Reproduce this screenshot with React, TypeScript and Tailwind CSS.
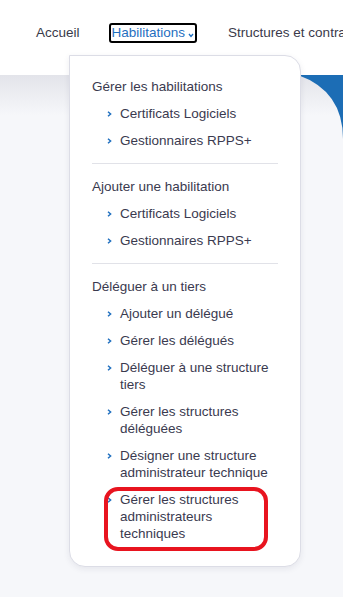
import { Fragment } from "react"

type Item = string[]

const sections: { title: string; items: Item[] }[] = [
  {
    title: "Gérer les habilitations",
    items: [["Certificats Logiciels"], ["Gestionnaires RPPS+"]],
  },
  {
    title: "Ajouter une habilitation",
    items: [["Certificats Logiciels"], ["Gestionnaires RPPS+"]],
  },
  {
    title: "Déléguer à un tiers",
    items: [
      ["Ajouter un délégué"],
      ["Gérer les délégués"],
      ["Déléguer à une structure tiers"],
      ["Gérer les structures déléguées"],
      ["Désigner une structure administrateur technique"],
      ["Gérer les structures administrateurs techniques"],
    ],
  },
]

function Chevron() {
  return (
    <svg width="5" height="6" viewBox="0 0 5 6" className="mt-[6px] shrink-0">
      <path d="M1 0.8 L3.6 3 L1 5.2" fill="none" stroke="#1f6fbf" strokeWidth="1.5" />
    </svg>
  )
}

export default function App() {
  return (
    <div className="relative h-[597px] w-[343px] overflow-hidden bg-[#f6f7fa] font-['Liberation_Sans',Arial,sans-serif] text-[13.5px]">
      <header className="flex h-[75px] items-start bg-white pl-[36px] pt-[24px] whitespace-nowrap">
        <span className="leading-[18px] text-[#3a3a4a]">Accueil</span>
        <span className="-mt-[1px] ml-[29px] flex items-center gap-[3px] rounded-[3px] border-2 border-black pl-[1px] pr-[1px] leading-[16px] text-[#1f6fbf]">
          Habilitations
          <svg width="6" height="5" viewBox="0 0 6 5" className="mt-[5px]">
            <path d="M1 1 L3 3.4 L5 1" fill="none" stroke="#1f6fbf" strokeWidth="1.4" />
          </svg>
        </span>
        <span className="ml-[31px] leading-[18px] text-[#3a3a4a]">Structures et contrat</span>
      </header>

      <div className="h-[40px] bg-gradient-to-b from-[#e3e4ea] to-[#f6f7fa]" />

      <svg className="absolute left-0 top-[75px]" width="343" height="80" viewBox="0 0 343 80">
        <path d="M298 0 Q343 16 343 64 L343 0 Z" fill="#1c6db5" />
      </svg>

      <nav className="absolute left-[69px] top-[55px] w-[232px] rounded-tr-[16px] rounded-b-[16px] border border-[#dcdde6] bg-white pl-[22px] pr-[22px] pt-[22px] pb-[24px] shadow-[0_2px_6px_rgba(40,40,80,0.08)]">
        {sections.map((s, i) => (
          <Fragment key={i}>
            {i > 0 && <div className="my-[14px] h-px bg-[#e1e2e8]" />}
            <div className="flex flex-col gap-[10px] text-[#3a3a4f]">
              <div className="leading-[17px]">{s.title}</div>
              {s.items.map((it, j) => (
                <div key={j} className="flex gap-[8px] pl-[15px] leading-[17px]">
                  <Chevron />
                  <span className="w-[158px]">{it}</span>
                </div>
              ))}
            </div>
          </Fragment>
        ))}
      </nav>

      <div className="pointer-events-none absolute left-[104px] top-[487px] h-[64px] w-[164px] rounded-[14px] border-[4px] border-[#e8141f]" />
    </div>
  )
}
